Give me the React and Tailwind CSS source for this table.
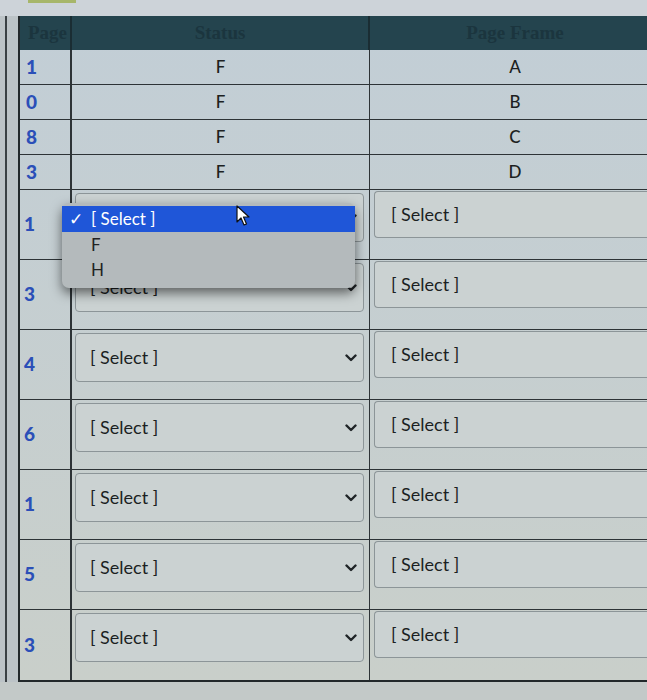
import React from "react";

const short = [
  { n: "1", s: "F", f: "A" },
  { n: "0", s: "F", f: "B" },
  { n: "8", s: "F", f: "C" },
  { n: "3", s: "F", f: "D" },
];
const tall = ["1", "3", "4", "6", "1", "5", "3"];

function Chevron() {
  return (
    <svg width="12" height="8" viewBox="0 0 12 8" className="shrink-0">
      <path d="M1.5 1.5 L6 6 L10.5 1.5" fill="none" stroke="#1f2427" strokeWidth="2.4" strokeLinecap="round" strokeLinejoin="round" />
    </svg>
  );
}

export default function App() {
  return (
    <div className="w-[647px] h-[700px] overflow-hidden relative bg-[#c3c9c8] [font-family:Lato,'Liberation_Sans',sans-serif]">
      <div className="h-[16px] bg-[#cdd3d9] flex">
        <div className="ml-[28px] w-[48px] h-[3px] bg-[#a7b66a]" />
      </div>
      <div className="flex">
        <div className="w-[18px] shrink-0 bg-[#bcc3c7] flex">
          <div className="ml-[5px] w-[2px] bg-[#3a4044]" />
        </div>
        <div className="w-[642px] shrink-0 border-l-2 border-b-2 border-[#22282b] bg-linear-to-b from-[#c2ced6] to-[#c9cfca]">
          <div className="grid grid-cols-[52px_298px_1fr] h-[34px] bg-[#24444e] [font-family:'Liberation_Serif',serif] text-[19px] font-bold text-[#1b353e]">
            <div className="border-r-2 border-[#1a2d33] flex items-center pl-[8px]">Page</div>
            <div className="border-r-2 border-[#1a2d33] flex items-center justify-center">Status</div>
            <div className="flex items-center justify-center">Page Frame</div>
          </div>
          {short.map((r, i) => (
            <div key={i} className="grid grid-cols-[52px_298px_1fr] h-[35px] border-b-[1.5px] border-[#2d3336]">
              <div className="border-r-2 border-[#2d3336] flex items-center pl-[6px] text-[19px] font-black text-[#2b4fb8]">{r.n}</div>
              <div className="border-r-[1.5px] border-[#2d3336] flex items-center justify-center text-[17px] font-medium text-[#1d1f21]">{r.s}</div>
              <div className="flex items-center justify-center text-[17px] font-medium text-[#1d1f21]">{r.f}</div>
            </div>
          ))}
          {tall.map((n, i) => (
            <div key={i} className={`grid grid-cols-[52px_298px_1fr] h-[70px] ${i < tall.length - 1 ? "border-b-[1.5px] border-[#2d3336]" : ""}`}>
              <div className="border-r-2 border-[#2d3336] flex items-center pl-[4px] text-[19px] font-black text-[#2b4fb8]">{n}</div>
              <div className="border-r-[1.5px] border-[#2d3336] pt-[3px] pl-[3px] pr-[5px]">
                <div className="h-[49px] rounded-[4px] border border-[#8c9598] bg-[#cbd2d2] flex items-center pl-[14px] pr-[6px] justify-between text-[18px] text-[#1b1f22]">
                  <span>[ Select ]</span>
                  <Chevron />
                </div>
              </div>
              <div className="pt-[1px] pl-[4px]">
                <div className="h-[47px] rounded-l-[4px] border border-r-0 border-[#8c9598] bg-[#cbd2d2] flex items-center pl-[16px] text-[18px] text-[#1b1f22]">
                  <span>[ Select ]</span>
                </div>
              </div>
            </div>
          ))}
        </div>
      </div>

      {/* open dropdown */}
      <div className="absolute left-[62px] top-[203px] w-[293px] h-[85px] rounded-[7px] bg-[#b4babc] shadow-[0_5px_12px_rgba(0,0,0,0.55)] pt-[3px] text-[17px]">
        <div className="h-[26px] bg-[#1f56d8] flex items-center text-white pl-[7px]">
          <span className="w-[22px]">✓</span>
          <span>[ Select ]</span>
        </div>
        <div className="h-[25px] flex items-center pl-[29px] text-[#222]">F</div>
        <div className="h-[25px] flex items-center pl-[29px] text-[#222]">H</div>
      </div>

      {/* cursor */}
      <svg className="absolute left-[236px] top-[205px]" width="16" height="22" viewBox="0 0 16 22">
        <path d="M1 1 L1 17 L5 13 L8 20 L10.5 19 L7.5 12 L13 12 Z" fill="#ffffff" stroke="#111" strokeWidth="1.2" strokeLinejoin="round" />
      </svg>
    </div>
  );
}
